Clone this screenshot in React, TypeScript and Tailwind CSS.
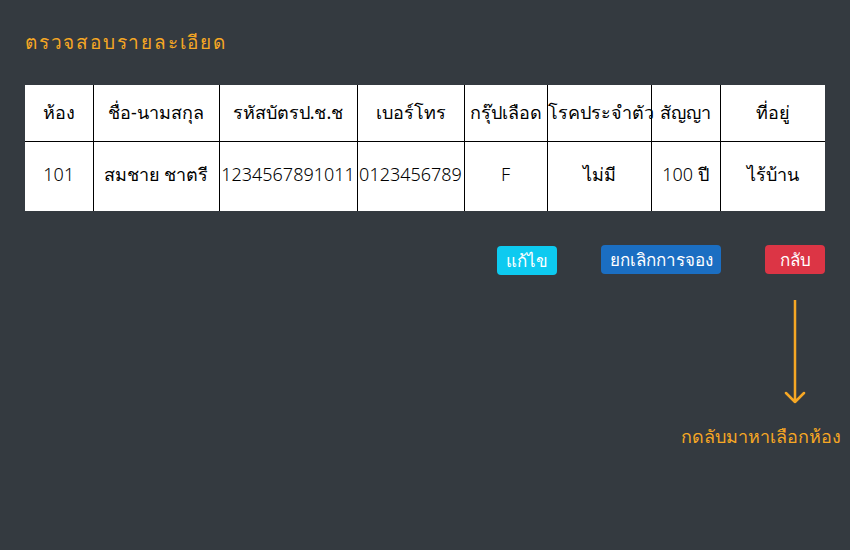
const headers = ['ห้อง', 'ชื่อ-นามสกุล', 'รหัสบัตรป.ช.ช', 'เบอร์โทร', 'กรุ๊ปเลือด', 'โรคประจำตัว', 'สัญญา', 'ที่อยู่'];
const row = ['101', 'สมชาย ชาตรี', '1234567891011', '0123456789', 'F', 'ไม่มี', '100 ปี', 'ไร้บ้าน'];
const widths = [68, 126, 138, 107, 83, 104, 69, 105];

// digits/latin look thin in the original, thai glyphs stay regular
function Cell({ text }: { text: string }) {
    return (
        <>
            {text.split(/([0-9A-Z]+)/).filter(Boolean).map((part, i) =>
                /^[0-9A-Z]+$/.test(part) ? (
                    <span key={i} className="font-light">{part}</span>
                ) : (
                    <span key={i}>{part}</span>
                )
            )}
        </>
    );
}

export default function App() {
    return (
        <div className="w-[850px] h-[550px] bg-[#343a40] font-['Noto_Sans','Liberation_Sans',sans-serif] overflow-hidden">
            <div className="px-[25px] pt-[28px]">
                <h1 className="text-[19px] tracking-[1.8px] text-[#f6a724] leading-[28px]">ตรวจสอบรายละเอียด</h1>

                <table className="mt-[29px] w-[800px] table-fixed border-collapse bg-white text-black text-[18px]">
                    <colgroup>
                        {widths.map((w, i) => (
                            <col key={i} style={{ width: w }} />
                        ))}
                    </colgroup>
                    <thead>
                        <tr className="h-[56px]">
                            {headers.map((h, i) => (
                                <th key={i} className="font-normal text-center border-x border-b border-black first:border-l-0 last:border-r-0 whitespace-nowrap px-0">
                                    {h}
                                </th>
                            ))}
                        </tr>
                    </thead>
                    <tbody>
                        <tr className="h-[70px]">
                            {row.map((c, i) => (
                                <td key={i} className="text-center border-x border-black first:border-l-0 last:border-r-0 whitespace-nowrap px-0 pb-[4px]">
                                    <Cell text={c} />
                                </td>
                            ))}
                        </tr>
                    </tbody>
                </table>

                <div className="mt-[34px] flex justify-end items-start">
                    <button className="mt-px w-[60px] h-[29px] rounded bg-[#0dcaf0] text-white text-[17px] leading-none">แก้ไข</button>
                    <button className="ml-[44px] w-[120px] h-[29px] rounded bg-[#1b6ec2] text-white text-[17px] leading-none">ยกเลิกการจอง</button>
                    <button className="ml-[44px] w-[60px] h-[29px] rounded bg-[#dc3545] text-white text-[17px] leading-none">กลับ</button>
                </div>

                <div className="flex flex-col items-end">
                    {/* down arrow pointing at the hint */}
                    <svg width="22" height="104" viewBox="0 0 22 104" className="mt-[25px] mr-[19px]">
                        <path d="M11 0 V102 M2 93 L11 102 L20 93" fill="none" stroke="#f6a724" strokeWidth="2.5" strokeLinecap="round" strokeLinejoin="round" />
                    </svg>
                    <p className="mt-[19px] mr-[-16px] text-[18px] text-[#f6a724]">กดลับมาหาเลือกห้อง</p>
                </div>
            </div>
        </div>
    );
}
